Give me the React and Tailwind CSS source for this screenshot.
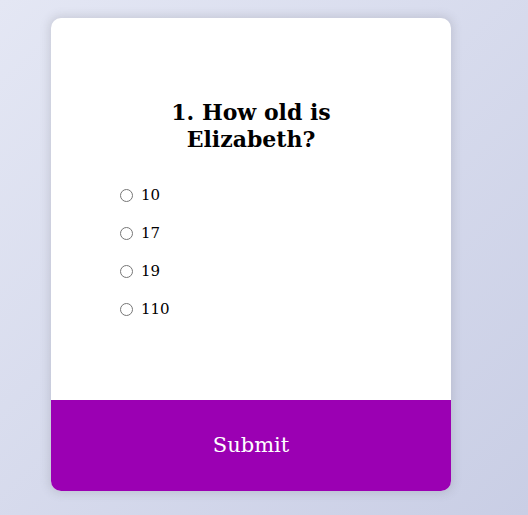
import React from "react";

const options = ["10", "17", "19", "110"];

export default function App() {
  return (
    <div className="min-h-[515px] bg-gradient-to-br from-[#e4e7f4] to-[#c9cee5] pt-[18px] font-['DejaVu_Serif',serif]">
      <div className="ml-[51px] w-[400px] overflow-hidden rounded-[10px] bg-white shadow-[0_0_10px_2px_rgba(100,100,111,0.2)]">
        <div className="px-16 pt-[81px] pb-[72px]">
          <h2 className="text-center text-[22px] font-bold leading-[27px] text-black">
            1. How old is
            <br />
            Elizabeth?
          </h2>
          <ul className="mt-[23px]">
            {options.map((opt) => (
              <li key={opt} className="flex h-[38px] items-center text-[15px] text-black">
                <input type="radio" name="answer" className="ml-[5px] mr-[8px] size-[13px]" />
                <label>{opt}</label>
              </li>
            ))}
          </ul>
        </div>
        <button
          type="button"
          className="block h-[91px] w-full bg-[#9b00b3] text-[21px] text-white"
        >
          Submit
        </button>
      </div>
    </div>
  );
}
